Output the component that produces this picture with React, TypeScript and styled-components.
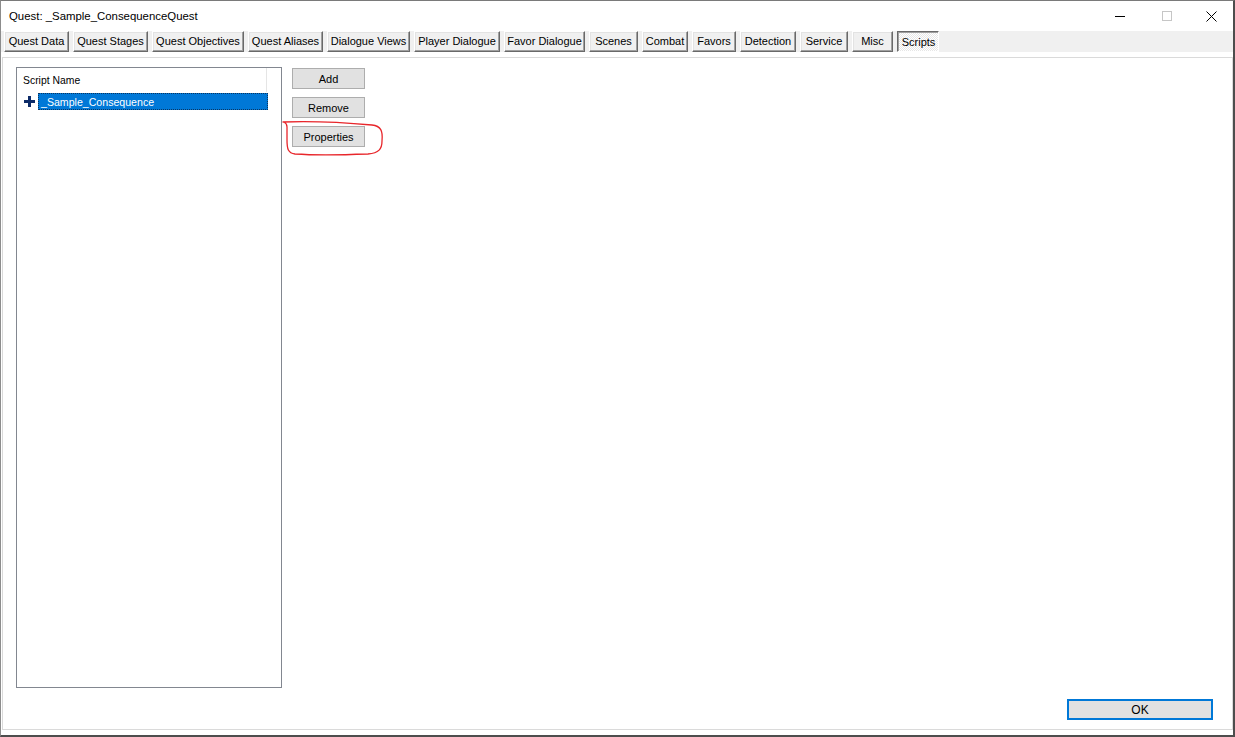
import React from 'react';
import styled, { createGlobalStyle } from 'styled-components';

const Global = createGlobalStyle`
  html, body { margin: 0; padding: 0; background: #fff; }
  body { font-family: "Liberation Sans", Arial, sans-serif; }
  * { box-sizing: border-box; }
`;

const Window = styled.div`
  position: relative;
  width: 1235px;
  height: 737px;
  display: flex;
  flex-direction: column;
  background: #fff;
  border-top: 1px solid #7a7a7a;
  border-left: 1px solid #8c8c8c;
  border-right: 2px solid #4d4d4d;
  border-bottom: 2px solid #4d4d4d;
  overflow: hidden;
`;

const TitleBar = styled.div`
  height: 30px;
  flex: none;
  display: flex;
  align-items: center;
  padding-left: 8px;
`;

const TitleText = styled.div`
  flex: 1;
  font-size: 11.4px;
  color: #000;
`;

const Controls = styled.div`
  display: flex;
  height: 100%;
`;

const ControlCell = styled.div<{ $w: number }>`
  width: ${(p) => p.$w}px;
  height: 100%;
  display: flex;
  align-items: center;
  justify-content: center;
`;

const MinGlyph = styled.div`
  width: 10px;
  height: 1px;
  background: #000;
`;

const MaxGlyph = styled.div`
  width: 10px;
  height: 10px;
  border: 1px solid #c6c6c6;
`;

const TabStrip = styled.div`
  height: 21px;
  flex: none;
  display: flex;
  gap: 4px;
  padding-left: 3px;
  background: #f0f0f0;
`;

const Tab = styled.div<{ $w: number; $active?: boolean }>`
  width: ${(p) => p.$w}px;
  height: 100%;
  display: flex;
  align-items: center;
  justify-content: center;
  font-size: 11px;
  color: #000;
  white-space: nowrap;
  border: 1px solid;
  border-color: ${(p) => (p.$active ? '#696969 #fff #fff #696969' : '#fff #696969 #696969 #fff')};
  box-shadow: ${(p) =>
    p.$active ? 'inset 1px 1px #a0a0a0' : 'inset -1px -1px #a0a0a0, inset 1px 1px #e3e3e3'};
  background: ${(p) =>
    p.$active ? 'repeating-conic-gradient(#ffffff 0 25%, #e6e6e6 0 50%) 0 0 / 2px 2px' : '#f0f0f0'};
  padding-top: ${(p) => (p.$active ? '1px' : '0')};
  padding-bottom: ${(p) => (p.$active ? '0' : '1px')};
  padding-left: ${(p) => (p.$active ? '1px' : '0')};
`;

const Spacer = styled.div`
  height: 5px;
  flex: none;
`;

const Panel = styled.div`
  flex: 1;
  margin: 0 0 5px 1px;
  border: 1px solid #dadada;
  display: flex;
  flex-direction: column;
  padding: 9px 19px 9px 13px;
`;

const TopRow = styled.div`
  display: flex;
  align-items: flex-start;
`;

const ListBox = styled.div`
  width: 266px;
  height: 621px;
  border: 1px solid #828790;
  display: flex;
  flex-direction: column;
  font-size: 10.4px;
`;

const ListHeader = styled.div`
  height: 24px;
  display: flex;
`;

const HeaderCell = styled.div`
  width: 250px;
  height: 100%;
  display: flex;
  align-items: center;
  padding-left: 6px;
  padding-top: 1px;
  color: #000;
  border-right: 1px solid #e5e5e5;
`;

const ListRow = styled.div`
  margin-top: 1px;
  height: 17px;
  display: flex;
  align-items: center;
  padding-left: 7px;
  gap: 3px;
`;

const Selection = styled.div`
  width: 230px;
  height: 17px;
  background: #0078d7;
  color: #fff;
  border: 1px dotted #0b3560;
  display: flex;
  align-items: center;
  padding-left: 2px;
  font-size: 10.6px;
`;

const ButtonColumn = styled.div`
  margin-left: 10px;
  margin-top: 1px;
  display: flex;
  flex-direction: column;
  gap: 8px;
`;

const Button = styled.div`
  width: 73px;
  height: 21px;
  background: #e1e1e1;
  border: 1px solid #adadad;
  display: flex;
  align-items: center;
  justify-content: center;
  font-size: 11px;
  color: #000;
`;

const Footer = styled.div`
  margin-top: 11px;
  display: flex;
  justify-content: flex-end;
`;

const OkButton = styled.div`
  width: 146px;
  height: 21px;
  background: #e1e1e1;
  border: 2px solid #0078d7;
  display: flex;
  align-items: center;
  justify-content: center;
  font-size: 12px;
  color: #000;
`;

const Annotation = styled.svg`
  position: absolute;
  left: 277px;
  top: 117px;
  width: 110px;
  height: 42px;
  pointer-events: none;
`;

const tabs: { label: string; w: number; active?: boolean }[] = [
  { label: 'Quest Data', w: 65 },
  { label: 'Quest Stages', w: 75 },
  { label: 'Quest Objectives', w: 92 },
  { label: 'Quest Aliases', w: 75 },
  { label: 'Dialogue Views', w: 83 },
  { label: 'Player Dialogue', w: 86 },
  { label: 'Favor Dialogue', w: 81 },
  { label: 'Scenes', w: 49 },
  { label: 'Combat', w: 46 },
  { label: 'Favors', w: 44 },
  { label: 'Detection', w: 56 },
  { label: 'Service', w: 48 },
  { label: 'Misc', w: 41 },
  { label: 'Scripts', w: 42, active: true },
];

const PlusIcon = () => (
  <svg width="11" height="11" viewBox="0 0 11 11">
    <rect x="4" y="0" width="3" height="11" fill="#0d2b68" />
    <rect x="0" y="4" width="11" height="3" fill="#0d2b68" />
  </svg>
);

const CloseIcon = () => (
  <svg width="11" height="11" viewBox="0 0 11 11">
    <path d="M0.5 0.5 L10.5 10.5 M10.5 0.5 L0.5 10.5" stroke="#000" strokeWidth="1" fill="none" />
  </svg>
);

export default function App() {
  return (
    <>
      <Global />
      <Window>
        <TitleBar>
          <TitleText>Quest: _Sample_ConsequenceQuest</TitleText>
          <Controls>
            <ControlCell $w={47}>
              <MinGlyph />
            </ControlCell>
            <ControlCell $w={47}>
              <MaxGlyph />
            </ControlCell>
            <ControlCell $w={43}>
              <CloseIcon />
            </ControlCell>
          </Controls>
        </TitleBar>
        <TabStrip>
          {tabs.map((t) => (
            <Tab key={t.label} $w={t.w} $active={t.active}>
              {t.label}
            </Tab>
          ))}
        </TabStrip>
        <Spacer />
        <Panel>
          <TopRow>
            <ListBox>
              <ListHeader>
                <HeaderCell>Script Name</HeaderCell>
              </ListHeader>
              <ListRow>
                <PlusIcon />
                <Selection>_Sample_Consequence</Selection>
              </ListRow>
            </ListBox>
            <ButtonColumn>
              <Button>Add</Button>
              <Button>Remove</Button>
              <Button>Properties</Button>
            </ButtonColumn>
          </TopRow>
          <Footer>
            <OkButton>OK</OkButton>
          </Footer>
        </Panel>
        <Annotation viewBox="0 0 110 42">
          <path
            d="M5 4 C32 3, 72 5, 94 7 C103 8, 105 13, 104 23 C104 31, 101 35, 90 36 C62 37, 32 37, 17 36 C10 35, 9 31, 9 22 L9 9 C9 6, 8 5, 6 4"
            stroke="#e8262b"
            strokeWidth="1.3"
            fill="none"
            strokeLinecap="round"
          />
        </Annotation>
      </Window>
    </>
  );
}
